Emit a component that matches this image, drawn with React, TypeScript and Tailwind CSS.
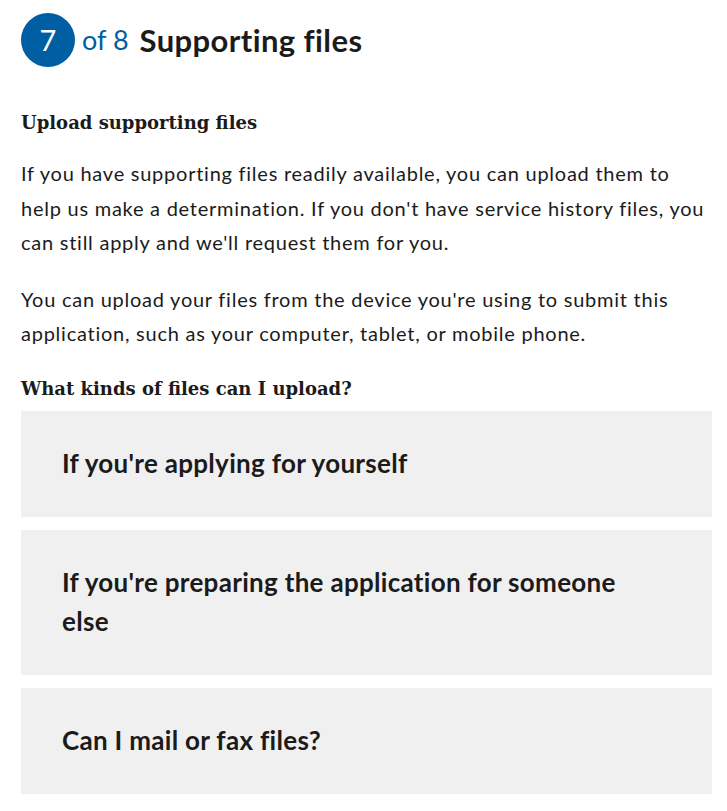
const sans = "font-['Lato','Noto_Sans',sans-serif]";
const serif = "font-['DejaVu_Serif','Liberation_Serif',serif]";

export default function App() {
  const questions = [
    "If you're applying for yourself",
    "If you're preparing the application for someone else",
    "Can I mail or fax files?",
  ];

  return (
    <div className={`min-h-screen bg-white text-[#1b1b1b] ${sans}`}>
      <div className="w-[712px] pl-[21px] pt-[13px]">
        <div className="flex items-center">
          <div className="grid size-[54px] place-items-center rounded-full bg-[#005ea2] text-[29px] text-white">7</div>
          <span className="ml-[7px] text-[27px] text-[#005ea2]">of 8</span>
          <h2 className="ml-[11px] text-[31px] font-bold tracking-[0.4px]">Supporting files</h2>
        </div>

        <h3 className={`mt-[42px] text-[18px] font-bold ${serif}`}>Upload supporting files</h3>
        <p className="mt-[20px] text-[20px] leading-[34.5px] tracking-[0.75px]">
          If you have supporting files readily available, you can upload them to help us make a determination. If you don't have service history files, you can still apply and we'll request them for you.
        </p>
        <p className="mt-[22px] text-[20px] leading-[34.5px] tracking-[0.75px]">
          You can upload your files from the device you're using to submit this application, such as your computer, tablet, or mobile phone.
        </p>
        <h3 className={`mt-[24px] text-[18px] font-bold ${serif}`}>What kinds of files can I upload?</h3>

        <div className="mt-[9px] flex flex-col gap-[13px]">
          {questions.map((q) => (
            <div key={q} className="bg-[#f0f0f0] py-[33.5px] pl-[41px] pr-[90px]">
              <h4 className="text-[26px] font-bold leading-[39px] tracking-[0.3px]">{q}</h4>
            </div>
          ))}
        </div>
      </div>
    </div>
  );
}
